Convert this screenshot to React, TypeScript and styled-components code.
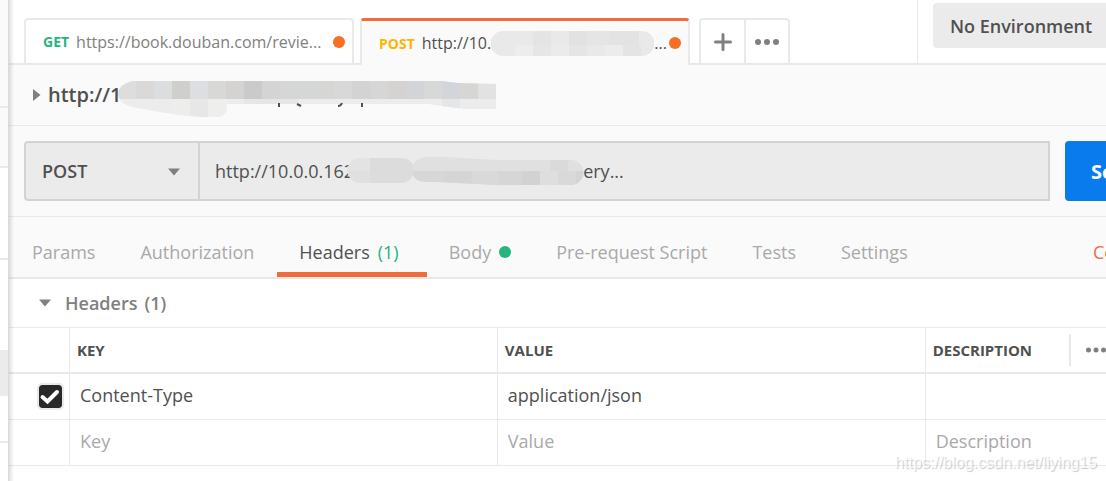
import React, { useState } from 'react';
import styled, { createGlobalStyle, css } from 'styled-components';

const color = {
  line: '#e9e9e9',
  fieldLine: '#d3d3d3',
  field: '#ebebeb',
  panel: '#fafafa',
  text: '#505050',
  grey: '#808080',
  faint: '#a9a9a9',
  orange: '#f26b3a',
  green: '#26b47f',
  blue: '#097bed',
};

const GlobalStyle = createGlobalStyle`
  *, *::before, *::after { box-sizing: border-box; }
  body { margin: 0; background: #fff; }
  body, button, input, select { font-family: "Open Sans", "Noto Sans", sans-serif; font-size: 18px; color: ${color.text}; }
  button, input, select { margin: 0; padding: 0; border: 0; background: none; border-radius: 0; outline: 0; }
  button { cursor: pointer; }
`;

const Window = styled.div`
  position: relative;
  display: flex;
  min-height: 100vh;
  overflow: hidden;
`;

const Sidebar = styled.aside`
  flex: none;
  width: 9px;
  display: flex;
  flex-direction: column;
  border-right: 1px solid #dadada;
`;

const SidebarBlock = styled.div<{ $height: number; $fill?: string; $ruled?: boolean }>`
  height: ${p => p.$height}px;
  background: ${p => p.$fill ?? '#fff'};
  border-bottom: ${p => (p.$ruled ? `2px solid ${color.line}` : '0')};
`;

const Main = styled.main`
  flex: 1;
  min-width: 0;
  position: relative;
  &::before {
    content: '';
    position: absolute;
    z-index: 2;
    inset: 0 auto 0 0;
    width: 5px;
    background: linear-gradient(to right, rgba(0, 0, 0, 0.12), rgba(0, 0, 0, 0));
    pointer-events: none;
  }
`;

const TopBar = styled.header`
  display: flex;
  height: 65px;
  padding-left: 15px;
  box-shadow: inset 0 -2px ${color.line};
`;

const RequestTabs = styled.nav`
  flex: 1;
  min-width: 0;
  display: flex;
  align-items: flex-end;
`;

const RequestTab = styled.button<{ $active?: boolean }>`
  flex: none;
  display: flex;
  align-items: center;
  width: 330px;
  height: ${p => (p.$active ? 47 : 45)}px;
  margin: 0 6px ${p => (p.$active ? 0 : 2)}px 0;
  padding: 0 7px 0 17px;
  border: 2px solid ${color.line};
  border-bottom: 0;
  border-radius: 4px 4px 0 0;
  background: #fff;
  font-size: 16px;
  color: ${color.grey};
  white-space: nowrap;
  ${p =>
    p.$active &&
    css`
      background: ${color.panel};
      border-top: 3px solid ${color.orange};
      color: ${color.text};
    `}
`;

const Verb = styled.span<{ $tone: string }>`
  margin-right: 7px;
  font-size: 14px;
  font-weight: 700;
  color: ${p => p.$tone};
`;

const Dot = styled.span<{ $tone: string }>`
  flex: none;
  width: 12px;
  height: 12px;
  border-radius: 50%;
  background: ${p => p.$tone};
`;

const UnsavedDot = styled(Dot)`
  margin-left: auto;
`;

const TabActions = styled.div`
  display: flex;
  margin: 0 0 2px 3px;
  height: 45px;
  border: 2px solid ${color.line};
  border-bottom: 0;
  border-radius: 4px 4px 0 0;
`;

const TabAction = styled.button`
  display: flex;
  align-items: center;
  justify-content: center;
  width: 43px;
  & + & {
    border-left: 2px solid ${color.line};
    width: 44px;
  }
`;

const Environment = styled.div`
  flex: none;
  width: 189px;
  height: 63px;
  padding: 3px 0 15px 15px;
  border-left: 1px solid ${color.line};
`;

const EnvironmentSelect = styled.select`
  appearance: none;
  width: 100%;
  height: 45px;
  padding-left: 17px;
  border-radius: 4px 0 0 4px;
  background: ${color.field};
  font-weight: 600;
`;

const TitleRow = styled.div`
  display: flex;
  align-items: center;
  height: 61px;
  padding-left: 24px;
  background: ${color.panel};
  border-bottom: 1px solid ${color.line};
`;

const Title = styled.h1`
  display: flex;
  align-items: center;
  margin: 0 0 0 7px;
  font-size: 20px;
  line-height: 28px;
  font-weight: 600;
  svg { margin-left: -4px; }
`;

const UrlRow = styled.form`
  display: flex;
  height: 91px;
  padding: 15px 0 15px 15px;
  background: ${color.panel};
  border-bottom: 1px solid ${color.line};
`;

const UrlBuilder = styled.div`
  flex: 1;
  min-width: 0;
  display: flex;
  margin-right: 15px;
  background: ${color.field};
  border: 2px solid ${color.fieldLine};
  border-radius: 4px 0 0 4px;
`;

const Method = styled.div`
  flex: none;
  position: relative;
  width: 174px;
  border-right: 2px solid ${color.fieldLine};
  svg {
    position: absolute;
    top: 25px;
    right: 18px;
    pointer-events: none;
  }
`;

const MethodSelect = styled.select`
  appearance: none;
  width: 100%;
  height: 100%;
  padding-left: 16px;
  font-weight: 600;
`;

const Address = styled.div`
  flex: 1;
  position: relative;
  svg {
    position: absolute;
    top: 14px;
    left: 147px;
    pointer-events: none;
  }
`;

const AddressInput = styled.input`
  width: 100%;
  height: 100%;
  padding-left: 15px;
`;

const SendButton = styled.button`
  flex: none;
  width: 41px;
  padding-left: 26px;
  overflow: hidden;
  border-radius: 4px 0 0 4px;
  background: ${color.blue};
  color: #fff;
  font-size: 20px;
  font-weight: 700;
  text-align: left;
`;

const Sections = styled.nav`
  display: flex;
  height: 62px;
  padding-left: 1px;
  background: ${color.panel};
  border-bottom: 2px solid ${color.line};
`;

const SectionTab = styled.button<{ $active?: boolean }>`
  flex: none;
  display: flex;
  align-items: center;
  gap: 8px;
  padding: 15px 23px 5px 22px;
  white-space: nowrap;
  color: ${p => (p.$active ? color.text : color.faint)};
  box-shadow: ${p => (p.$active ? `inset 0 -5px ${color.orange}` : 'none')};
`;

const Count = styled.span`
  margin-right: 5px;
  color: ${color.green};
`;

const CookiesLink = styled.a`
  flex: none;
  width: 13px;
  margin-left: auto;
  padding-top: 10px;
  line-height: 50px;
  overflow: hidden;
  color: ${color.orange};
  text-decoration: none;
`;

const GroupToggle = styled.button`
  display: flex;
  align-items: center;
  gap: 14px;
  width: 100%;
  height: 48px;
  padding-left: 30px;
  color: ${color.grey};
  font-weight: 600;
`;

const GroupName = styled.span`
  display: flex;
  gap: 7px;
`;

const Grid = styled.table`
  width: 100%;
  table-layout: fixed;
  border-collapse: separate;
  border-spacing: 0;
  border-top: 1px solid ${color.line};
`;

const SelectColumn = styled.col`
  width: 61px;
`;

const WideColumn = styled.col`
  width: 39%;
`;

const HeadCell = styled.th`
  height: 46px;
  padding: 0 0 0 7px;
  border-bottom: 2px solid ${color.line};
  border-right: 1px solid ${color.line};
  font-size: 15px;
  font-weight: 700;
  text-align: left;
  &:last-child { border-right: 0; }
`;

const HeadContent = styled.div`
  display: flex;
  align-items: center;
  justify-content: space-between;
`;

const MoreButton = styled.button`
  display: flex;
  align-items: center;
  width: 37px;
  height: 32px;
  padding-left: 15px;
  overflow: hidden;
  border-left: 2px solid ${color.line};
`;

const Cell = styled.td`
  height: 46px;
  padding: 0;
  border-bottom: 1px solid ${color.line};
  border-right: 1px solid ${color.line};
  &:last-child { border-right: 0; }
`;

const CellInput = styled.input`
  display: block;
  width: 100%;
  height: 45px;
  padding: 0 0 4px 10px;
  &::placeholder { color: ${color.faint}; opacity: 1; }
`;

const CheckLabel = styled.label`
  position: relative;
  display: block;
  width: 27px;
  height: 27px;
  margin-left: 28px;
  svg {
    position: absolute;
    inset: 0;
    pointer-events: none;
  }
`;

const Checkbox = styled.input`
  appearance: none;
  display: block;
  width: 27px;
  height: 27px;
  border: 2px solid ${color.line};
  border-radius: 5px;
  background: #fff;
  background-clip: padding-box;
  &:checked { background-color: #282828; }
  & + svg { visibility: hidden; }
  &:checked + svg { visibility: visible; }
`;

const Watermark = styled.span`
  position: absolute;
  right: 9px;
  bottom: 8px;
  font: 16px/20px "Liberation Sans", Arial, sans-serif;
  color: rgba(255, 255, 255, 0.8);
  text-shadow: 1px 1px 1px rgba(0, 0, 0, 0.22);
  pointer-events: none;
`;

const Caret = ({ open }: { open?: boolean }) =>
  open ? (
    <svg width="12" height="8" viewBox="0 0 12 8" aria-hidden="true">
      <path d="M0 0.5H12L6 7.5Z" fill={color.grey} />
    </svg>
  ) : (
    <svg width="8" height="12" viewBox="0 0 8 12" aria-hidden="true">
      <path d="M0 0V12L7.5 6Z" fill={color.grey} />
    </svg>
  );

const Dots = () => (
  <svg width="24" height="6" viewBox="0 0 24 6" fill={color.grey} aria-hidden="true">
    <circle cx="3" cy="3" r="3" />
    <circle cx="12" cy="3" r="3" />
    <circle cx="21" cy="3" r="3" />
  </svg>
);

type Tile = [x: number, y: number, w: number, h: number, fill: string];

/* Pixelated smear over the private part of an address; `top` leaves blank space above it. */
function Mosaic({ id, width, height, top = 0, outline, tiles, base, children }: {
  id: string;
  width: number;
  height: number;
  top?: number;
  outline: string;
  tiles: Tile[];
  base: string;
  children?: React.ReactNode;
}) {
  return (
    <svg width={width} height={height} viewBox={`0 ${-top} ${width} ${height}`} aria-hidden="true">
      <clipPath id={id}>
        <path d={outline} />
      </clipPath>
      <g clipPath={`url(#${id})`} shapeRendering="crispEdges">
        <rect width={width} height={height} fill={base} />
        {tiles.map(([x, y, w, h, fill]) => (
          <rect key={`${x}-${y}`} x={x} y={y} width={w} height={h} fill={fill} />
        ))}
      </g>
      {children}
    </svg>
  );
}

const titleFills = ['#dcdddc', '#dad9d7', '#dbdddf', '#cfcfcd', '#dcdee1', '#d8d8d7', '#d4d3d2', '#cacacb', '#d4d4d5', '#d5d7d6', '#d5d7d6', '#d6d6d4', '#d8d8d8', '#d3d3d4', '#d6d6d7', '#d5d3d1', '#d3d4d7', '#d7d8d8', '#d3d6d9', '#d6d6d3', '#e2e2e2'];
const titleTiles: Tile[] = [
  ...titleFills.map((fill, i): Tile => [i * 18, 0, 18, 18, fill]),
  [54, 18, 18, 18, '#ededeb'],
  [72, 18, 18, 18, '#e7e7e8'],
  [90, 18, 20, 18, '#eeeeec'],
  [126, 18, 54, 18, '#e6e6e6'],
  [324, 18, 18, 9, '#e5e6e8'],
];

export default function App() {
  const [method, setMethod] = useState('POST');
  const [address, setAddress] = useState(`http://10.0.0.162${'\u00a0'.repeat(49)}ery...`);

  return (
    <>
      <GlobalStyle />
      <Window>
        <Sidebar>
          <SidebarBlock $height={108} $fill={color.panel} $ruled />
          <SidebarBlock $height={60} $fill={color.panel} $ruled />
          <SidebarBlock $height={92} $ruled />
          <SidebarBlock $height={90} />
          <SidebarBlock $height={46} $fill={color.field} />
          <SidebarBlock $height={47} $ruled />
        </Sidebar>
        <Main>
          <TopBar>
            <RequestTabs>
              <RequestTab type="button">
                <Verb $tone={color.green}>GET</Verb>
                https://book.douban.com/revie...
                <UnsavedDot $tone="#f47023" />
              </RequestTab>
              <RequestTab type="button" $active>
                <Verb $tone="#ffb400">POST</Verb>
                http://10.
                <Mosaic
                  id="tab-smear"
                  width={163}
                  height={25}
                  base="#e9e9e9"
                  outline="M12 0H151A12 12 0 0 1 151 25H12A12 12 0 0 1 12 0Z"
                  tiles={[
                    [42, 0, 18, 14, '#e4e4e4'],
                    [78, 0, 18, 14, '#e2e2e2'],
                    [96, 0, 22, 14, '#e5e5e5'],
                    [118, 0, 30, 14, '#e3e3e3'],
                    [24, 14, 18, 11, '#ededed'],
                    [42, 14, 18, 11, '#e6e6e6'],
                    [60, 14, 18, 11, '#ebebeb'],
                    [78, 14, 18, 11, '#e5e5e5'],
                    [114, 14, 18, 11, '#ececec'],
                    [132, 14, 18, 11, '#e4e4e4'],
                  ]}
                />
                ...
                <UnsavedDot $tone="#f47023" />
              </RequestTab>
              <TabActions>
                <TabAction type="button" aria-label="New tab">
                  <svg width="18" height="18" viewBox="0 0 18 18" stroke={color.grey} strokeWidth="3" strokeLinecap="round" aria-hidden="true">
                    <path d="M9 1.5V16.5M1.5 9H16.5" />
                  </svg>
                </TabAction>
                <TabAction type="button" aria-label="Tab options">
                  <Dots />
                </TabAction>
              </TabActions>
            </RequestTabs>
            <Environment>
              <EnvironmentSelect aria-label="Environment">
                <option>No Environment</option>
              </EnvironmentSelect>
            </Environment>
          </TopBar>

          <TitleRow>
            <Caret />
            <Title>
              http://1
              <Mosaic
                id="title-smear"
                width={378}
                height={48}
                top={10}
                base="#ececec"
                outline="M14 0H324L340 2L378 3V28H346L310 23H109V27Q108 36 98 36H84Q50 33 36 30L14 26Q0 22 0 12Q2 3 14 0Z"
                tiles={titleTiles}
              >
                <path d="M161 22v4M179 23l4 2M224 22q-1 3 -4 3M244 22v4" stroke={color.text} strokeWidth="2" fill="none" />
              </Mosaic>
            </Title>
          </TitleRow>

          <UrlRow onSubmit={e => e.preventDefault()}>
            <UrlBuilder>
              <Method>
                <MethodSelect aria-label="Method" value={method} onChange={e => setMethod(e.target.value)}>
                  <option>POST</option>
                </MethodSelect>
                <Caret open />
              </Method>
              <Address>
                <AddressInput aria-label="Request URL" value={address} onChange={e => setAddress(e.target.value)} />
                <Mosaic
                  id="address-smear"
                  width={238}
                  height={28}
                  base="#e0e0e0"
                  outline="M13 1H54Q64 2 66 8Q70 0 80 0H96L150 3H224A12 12 0 0 1 224 28H150L90 25H78Q68 24 66 18Q62 26 54 26H13A12 12 0 0 1 13 1Z"
                  tiles={[
                    [0, 0, 23, 14, '#e3e3e3'],
                    [23, 0, 43, 28, '#dcdcdc'],
                    [66, 14, 32, 14, '#d7d7d7'],
                    [98, 14, 27, 14, '#d5d5d5'],
                    [125, 14, 26, 14, '#d9d9d9'],
                    [151, 14, 24, 14, '#d6d6d6'],
                    [175, 14, 18, 14, '#d2d2d2'],
                    [193, 14, 18, 14, '#dedede'],
                    [203, 0, 18, 14, '#dadada'],
                    [211, 14, 18, 14, '#d9d9d9'],
                    [229, 14, 18, 14, '#d4d4d4'],
                  ]}
                />
              </Address>
            </UrlBuilder>
            <SendButton type="submit">Send</SendButton>
          </UrlRow>

          <Sections>
            <SectionTab type="button">Params</SectionTab>
            <SectionTab type="button">Authorization</SectionTab>
            <SectionTab type="button" $active>
              Headers <Count>(1)</Count>
            </SectionTab>
            <SectionTab type="button">
              Body <Dot $tone={color.green} />
            </SectionTab>
            <SectionTab type="button">Pre-request Script</SectionTab>
            <SectionTab type="button">Tests</SectionTab>
            <SectionTab type="button">Settings</SectionTab>
            <CookiesLink href="#cookies">Cookies</CookiesLink>
          </Sections>

          <GroupToggle type="button">
            <Caret open />
            <GroupName>
              <span>Headers</span>
              <span>(1)</span>
            </GroupName>
          </GroupToggle>
          <Grid>
            <colgroup>
              <SelectColumn />
              <WideColumn />
              <WideColumn />
              <col />
            </colgroup>
            <thead>
              <tr>
                <HeadCell aria-label="Enabled" />
                <HeadCell>KEY</HeadCell>
                <HeadCell>VALUE</HeadCell>
                <HeadCell>
                  <HeadContent>
                    DESCRIPTION
                    <MoreButton type="button" aria-label="Column options">
                      <Dots />
                    </MoreButton>
                  </HeadContent>
                </HeadCell>
              </tr>
            </thead>
            <tbody>
              <tr>
                <Cell>
                  <CheckLabel>
                    <Checkbox type="checkbox" defaultChecked aria-label="Enable Content-Type" />
                    <svg width="27" height="27" viewBox="0 0 27 27" fill="none" stroke="#fff" strokeWidth="4" strokeLinecap="round" aria-hidden="true">
                      <path d="M5.5 14L10.5 18.5L20 9" />
                    </svg>
                  </CheckLabel>
                </Cell>
                <Cell><CellInput aria-label="Key" defaultValue="Content-Type" /></Cell>
                <Cell><CellInput aria-label="Value" defaultValue="application/json" /></Cell>
                <Cell><CellInput aria-label="Description" /></Cell>
              </tr>
              <tr>
                <Cell />
                <Cell><CellInput aria-label="New key" placeholder="Key" /></Cell>
                <Cell><CellInput aria-label="New value" placeholder="Value" /></Cell>
                <Cell><CellInput aria-label="New description" placeholder="Description" /></Cell>
              </tr>
            </tbody>
          </Grid>
        </Main>
        <Watermark>https://blog.csdn.net/liying15</Watermark>
      </Window>
    </>
  );
}
